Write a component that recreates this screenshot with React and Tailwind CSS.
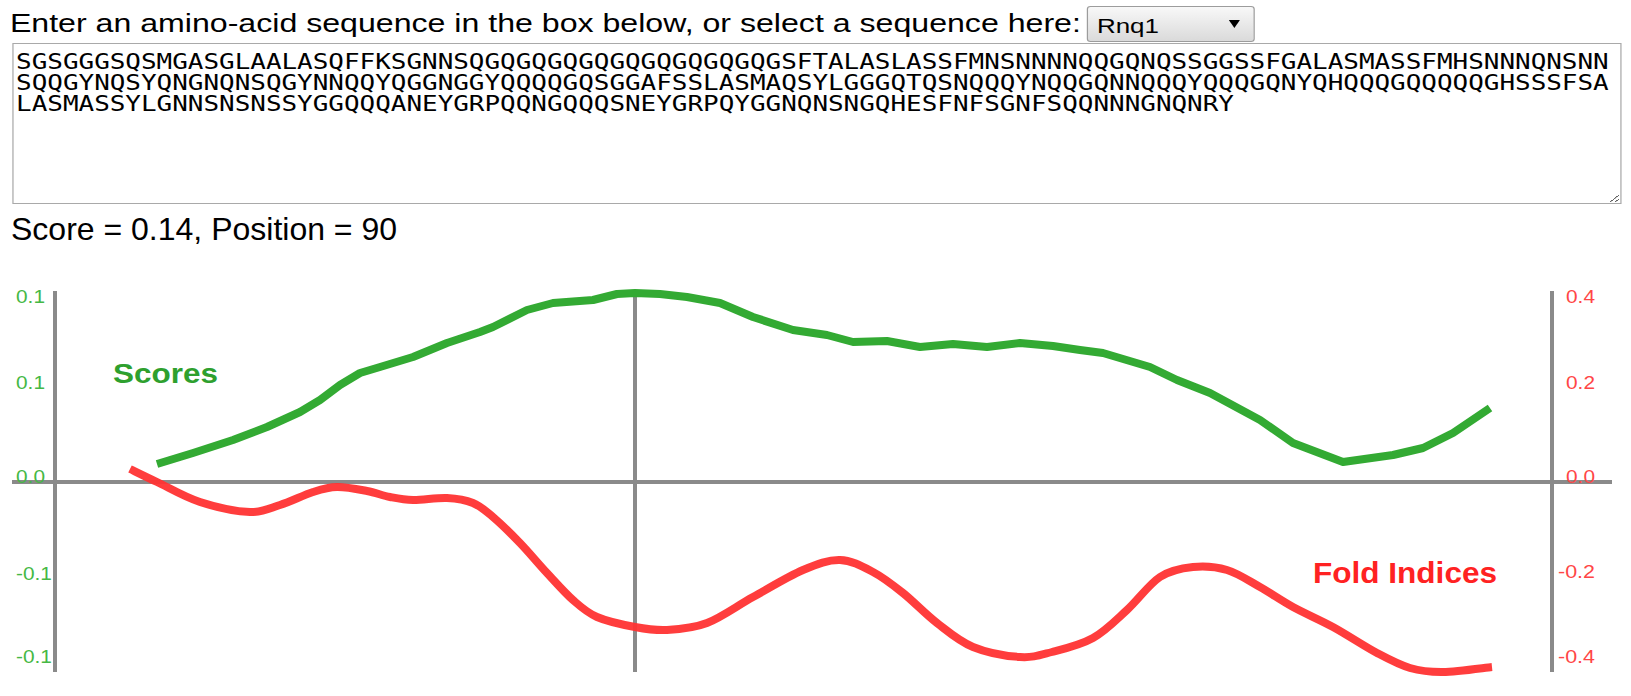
import React from "react";

const SEQUENCE = [
  "SGSGGGSQSMGASGLAALASQFFKSGNNSQGQGQGQGQGQGQGQGQGQGSFTALASLASSFMNSNNNNQQGQNQSSGGSSFGALASMASSFMHSNNNQNSNN",
  "SQQGYNQSYQNGNQNSQGYNNQQYQGGNGGYQQQQGQSGGAFSSLASMAQSYLGGGQTQSNQQQYNQQGQNNQQQYQQQGQNYQHQQQGQQQQQGHSSSFSA",
  "LASMASSYLGNNSNSNSSYGGQQQANEYGRPQQNGQQQSNEYGRPQYGGNQNSNGQHESFNFSGNFSQQNNNGNQNRY",
].join("\n");

// score curve, page coordinates
const scores = [
  [157, 464], [193, 453], [233, 440], [267, 427], [300, 412], [320, 400],
  [340, 385], [360, 373], [380, 367], [413, 357], [447, 343], [480, 332],
  [493, 327], [527, 310], [553, 303], [593, 300], [617, 294], [635, 293],
  [660, 294], [687, 297], [720, 303], [753, 317], [793, 330], [827, 335],
  [853, 342], [887, 341], [920, 347], [953, 344], [987, 347], [1020, 343],
  [1053, 346], [1080, 350], [1103, 353], [1150, 367], [1177, 380],
  [1210, 393], [1260, 420], [1293, 443], [1343, 462], [1393, 455],
  [1423, 448], [1453, 433], [1490, 408],
];

// fold index curve
const folds = [
  [130, 469], [157, 482], [200, 502], [250, 512], [280, 505], [313, 492],
  [337, 487], [367, 491], [390, 497], [413, 500], [447, 498], [473, 503],
  [493, 517], [520, 543], [547, 573], [573, 600], [597, 617], [635, 627],
  [667, 630], [707, 623], [753, 597], [803, 570], [840, 560], [873, 572],
  [903, 593], [937, 623], [973, 647], [1020, 657], [1052, 652], [1093, 638],
  [1127, 610], [1160, 577], [1193, 567], [1227, 570], [1260, 587],
  [1293, 607], [1333, 627], [1377, 653], [1410, 668], [1443, 672],
  [1492, 667],
];

function smooth(pts) {
  let d = `M${pts[0][0]} ${pts[0][1]}`;
  for (let i = 0; i < pts.length - 1; i++) {
    const p0 = pts[i - 1] || pts[i];
    const p1 = pts[i];
    const p2 = pts[i + 1];
    const p3 = pts[i + 2] || p2;
    const c1x = p1[0] + (p2[0] - p0[0]) / 6;
    const c1y = p1[1] + (p2[1] - p0[1]) / 6;
    const c2x = p2[0] - (p3[0] - p1[0]) / 6;
    const c2y = p2[1] - (p3[1] - p1[1]) / 6;
    d += ` C${c1x} ${c1y} ${c2x} ${c2y} ${p2[0]} ${p2[1]}`;
  }
  return d;
}

const leftTicks = [
  ["0.1", 303, 29],
  ["0.1", 389, 29],
  ["0.0", 483, 29],
  ["-0.1", 580, 36],
  ["-0.1", 663, 36],
];

const rightTicks = [
  ["0.4", 303, 1566, 29],
  ["0.2", 389, 1566, 29],
  ["0.0", 483, 1566, 29],
  ["-0.2", 578, 1558, 37],
  ["-0.4", 663, 1558, 37],
];

function Chart() {
  return (
    <svg
      className="block"
      width="1631"
      height="448"
      viewBox="0 248 1631 448"
      fontFamily="'Liberation Sans', Arial, sans-serif"
    >
      {/* axes */}
      <g stroke="#8a8a8a" strokeWidth="4">
        <line x1="12" y1="482" x2="1612" y2="482" />
        <line x1="55" y1="291" x2="55" y2="672" />
        <line x1="635" y1="291" x2="635" y2="672" />
        <line x1="1552" y1="291" x2="1552" y2="672" />
      </g>

      {leftTicks.map(([t, y, w], i) => (
        <text key={i} x="16" y={y} fontSize="18" fill="#45b845" textLength={w} lengthAdjust="spacingAndGlyphs">
          {t}
        </text>
      ))}
      {rightTicks.map(([t, y, x, w], i) => (
        <text key={i} x={x} y={y} fontSize="18" fill="#ff4646" textLength={w} lengthAdjust="spacingAndGlyphs">
          {t}
        </text>
      ))}

      <polyline
        points={scores.map((p) => p.join(",")).join(" ")}
        fill="none"
        stroke="#33aa33"
        strokeWidth="8"
        strokeLinejoin="round"
      />
      <path d={smooth(folds)} fill="none" stroke="#ff3333" strokeWidth="8" opacity="0.95" />

      <text x="113" y="383" fontSize="28" fontWeight="bold" fill="#2ea02e" textLength="105" lengthAdjust="spacingAndGlyphs">
        Scores
      </text>
      <text x="1313" y="583" fontSize="29" fontWeight="bold" fill="#ff2222" textLength="184" lengthAdjust="spacingAndGlyphs">
        Fold Indices
      </text>
    </svg>
  );
}

export default function App() {
  return (
    <div className="w-full h-[696px] overflow-hidden bg-white text-black font-[family-name:Liberation_Sans,Arial,sans-serif]">
      <div className="w-[1321px] origin-top-left scale-x-[1.235]">
        <div className="flex items-start h-[43px] pl-[8px]">
          <span className="mt-[8px] text-[26px] leading-[30px] whitespace-nowrap">
            Enter an amino-acid sequence in the box below, or select a sequence here:
          </span>
          <div className="ml-[5px] mt-[6px] h-[36px] w-[136px] flex items-center justify-between pl-[7px] pr-[11px] border border-[#9c9c9c] rounded-[3px] bg-linear-to-b from-[#f8f8f8] to-[#dadada] text-[21px] leading-[24px]">
            <span className="pt-[3px]">Rnq1</span>
            <svg width="9" height="8" viewBox="0 0 9 8">
              <path d="M0 0H9L4.5 8Z" fill="#000" />
            </svg>
          </div>
        </div>
        <textarea
          className="block ml-[10px] w-[1303px] h-[161px] border border-[#a9a9a9] pt-[8px] pl-[2px] font-[family-name:DejaVu_Sans_Mono,monospace] text-[21px] leading-[21px] whitespace-pre overflow-hidden outline-none bg-white"
          wrap="off"
          spellCheck={false}
          defaultValue={SEQUENCE}
        />
      </div>
      <div className="mt-[7px] pl-[11px] text-[32px] leading-[37px]">
        Score = 0.14, Position = 90
      </div>
      <Chart />
    </div>
  );
}
